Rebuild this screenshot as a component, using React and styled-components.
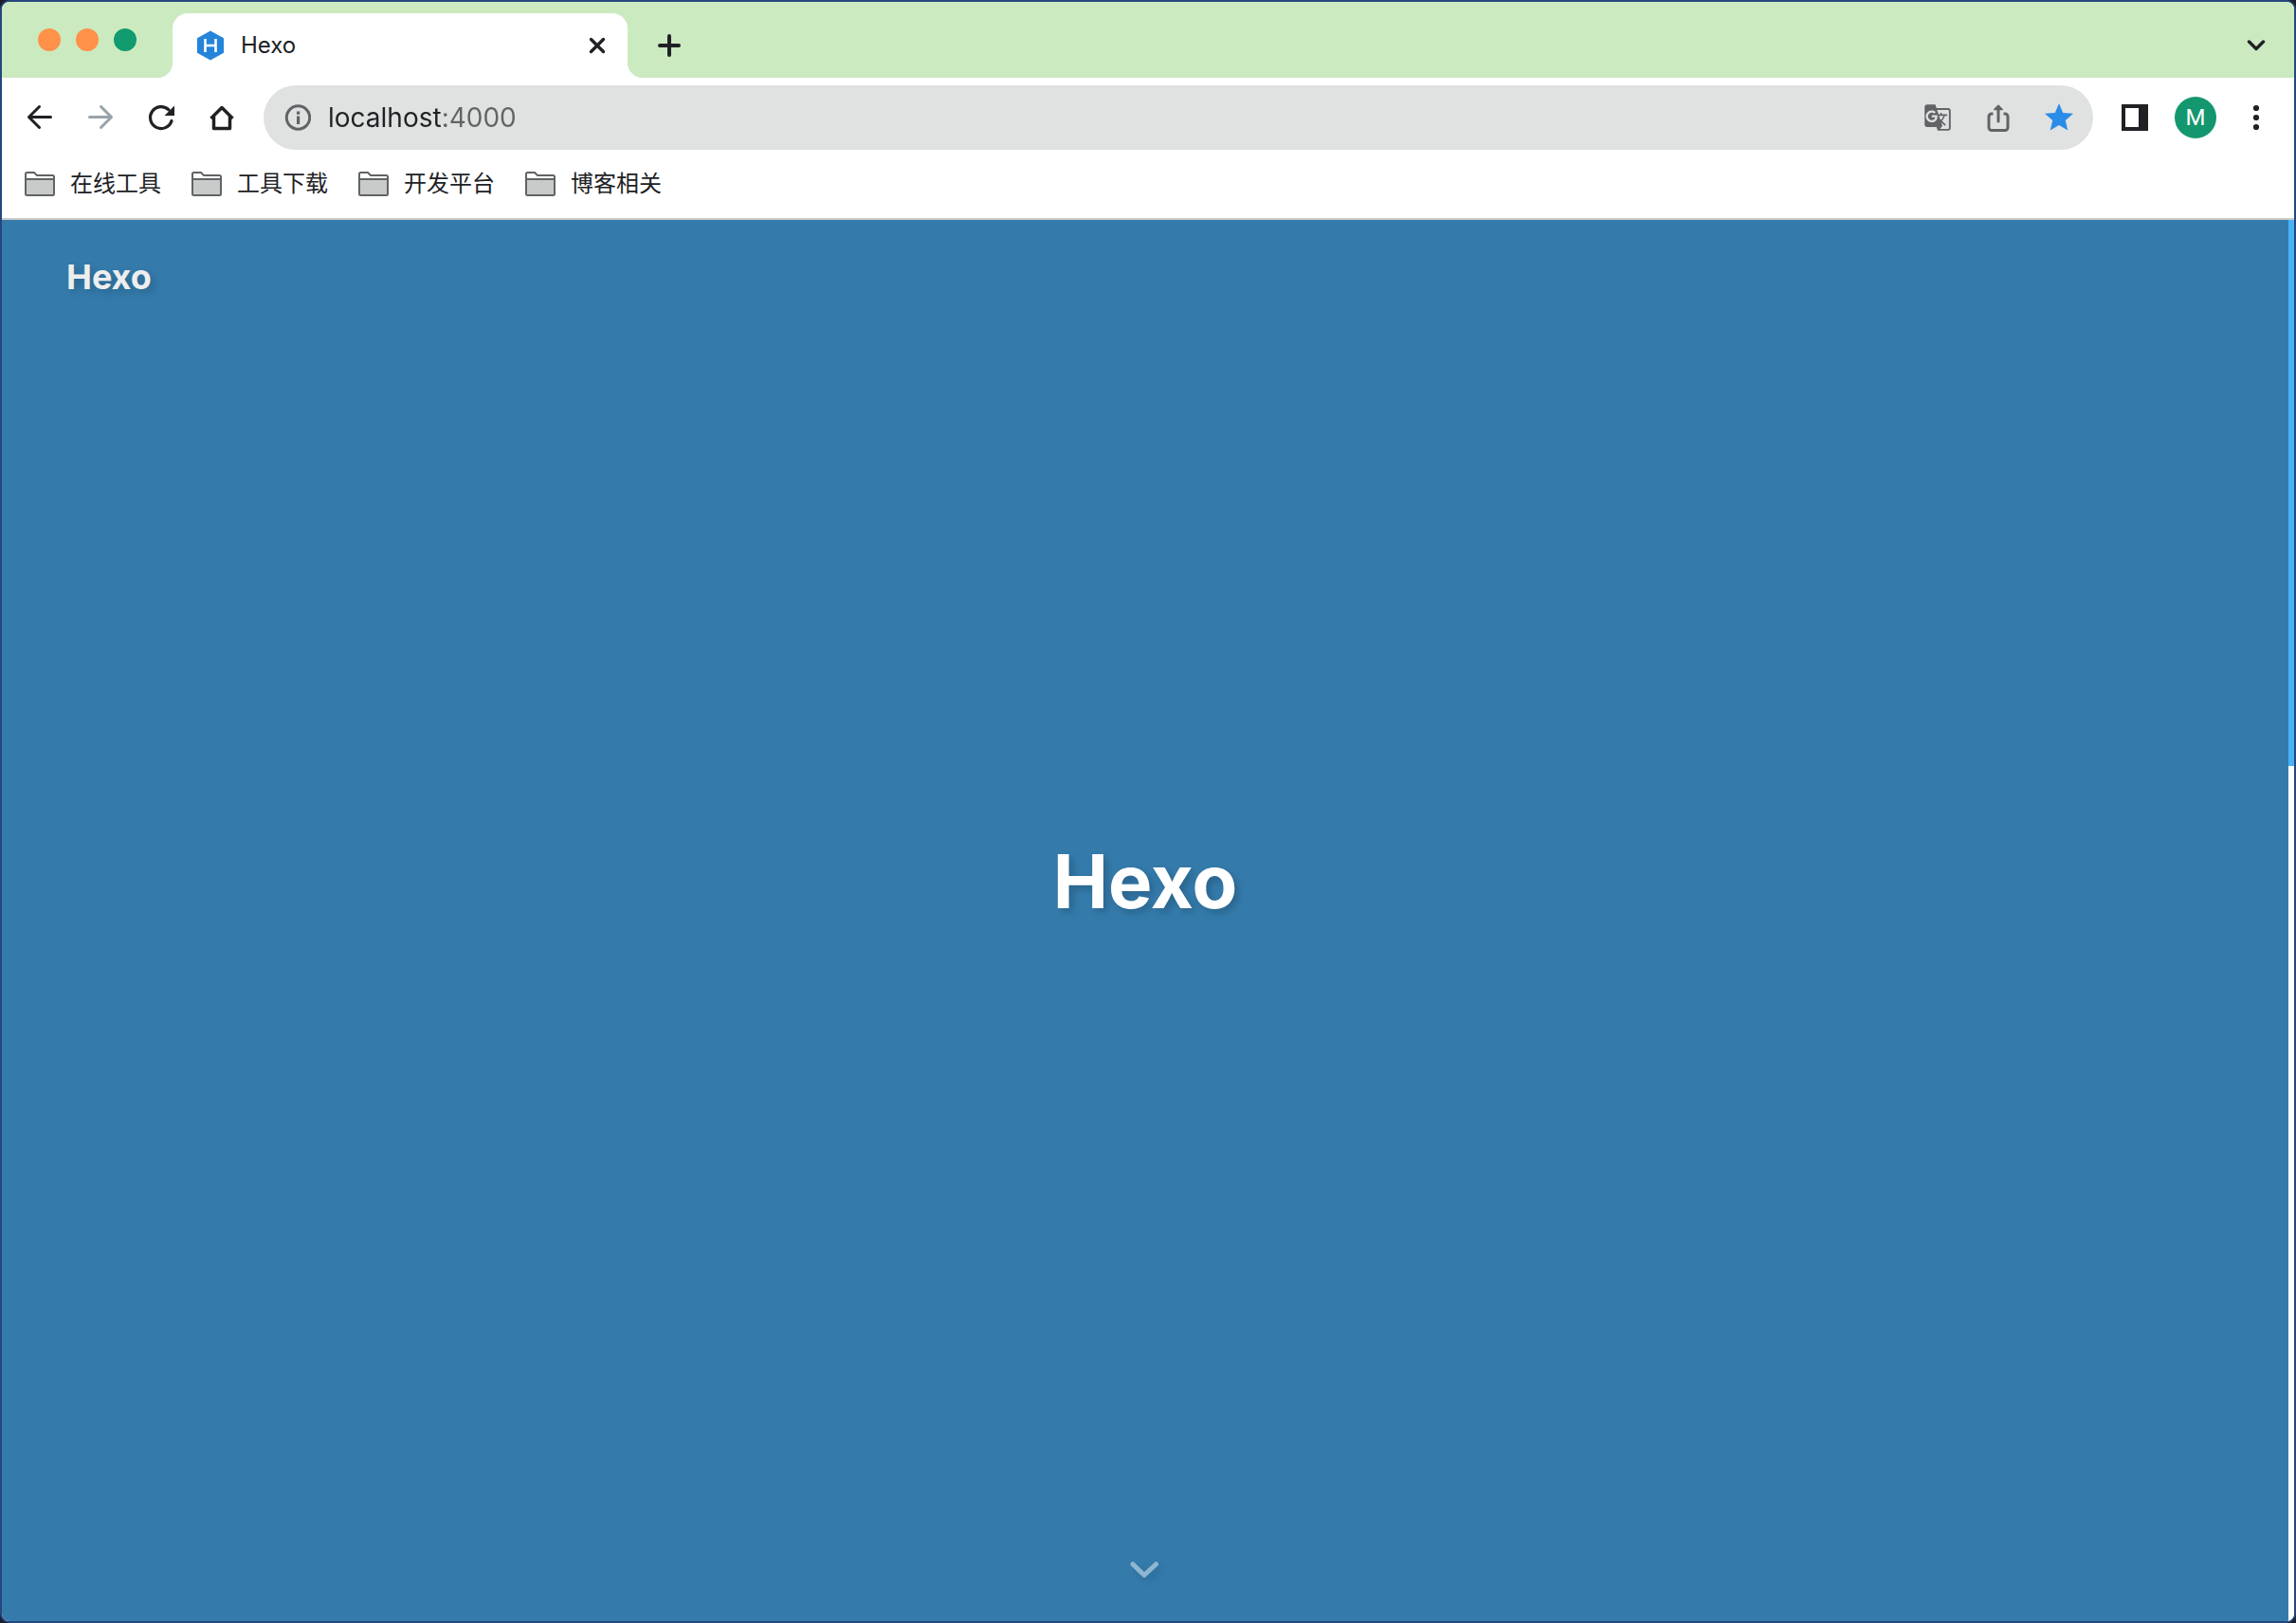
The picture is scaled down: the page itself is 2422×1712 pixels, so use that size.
import styled, { createGlobalStyle } from "styled-components";
import { MdGTranslate, MdStar } from "react-icons/md";

const GlobalStyle = createGlobalStyle`
  * {
    box-sizing: border-box;
  }
  body {
    margin: 0;
    background: #1b1f2b;
    font-family: Inter, "Noto Sans CJK SC", sans-serif;
    color: #202124;
  }
  button {
    font: inherit;
    color: inherit;
    background: none;
    border: none;
    padding: 0;
    cursor: pointer;
  }
`;

const Window = styled.div`
  display: flex;
  flex-direction: column;
  min-height: 100vh;
  border: 2px solid #26477e;
  border-radius: 10px;
  background: #fff;
  overflow: hidden;
`;

const TabStrip = styled.div`
  display: flex;
  align-items: center;
  height: 80px;
  padding: 0 20px 0 38px;
  background: #cbeac0;
`;

const Lights = styled.div`
  display: flex;
  gap: 16px;
  margin-right: 38px;
`;

const Light = styled.button`
  width: 24px;
  height: 24px;
  border-radius: 50%;
  background: ${(p) => p.$color};
`;

const Tab = styled.div`
  position: relative;
  display: flex;
  align-items: center;
  align-self: flex-end;
  gap: 18px;
  width: 480px;
  height: 68px;
  padding: 0 16px 0 26px;
  border-radius: 16px 16px 0 0;
  background: #fff;
  font-size: 24px;
  line-height: 32px;

  &::before,
  &::after {
    content: "";
    position: absolute;
    bottom: 0;
    width: 16px;
    height: 16px;
  }
  &::before {
    right: 100%;
    background: radial-gradient(circle at 0 0, transparent 16px, #fff 16px);
  }
  &::after {
    left: 100%;
    background: radial-gradient(circle at 100% 0, transparent 16px, #fff 16px);
  }
`;

const TabTitle = styled.span`
  flex: 1;
`;

const IconButton = styled.button`
  display: flex;
  align-items: center;
  justify-content: center;
  flex: none;
  width: ${(p) => (p.$small ? "32px" : "40px")};
  height: 40px;
  color: ${(p) => p.$color || "#202124"};
  svg {
    flex: none;
  }
`;

const NewTab = styled(IconButton)`
  margin: 12px auto 0 24px;
`;

const TabSearch = styled(IconButton)`
  margin-top: 12px;
`;

const Toolbar = styled.div`
  display: flex;
  align-items: center;
  gap: 24px;
  padding: 8px 20px 0;
`;

const Omnibox = styled.div`
  flex: 1;
  display: flex;
  align-items: center;
  gap: 24px;
  height: 68px;
  padding: 0 16px 0 22px;
  border-radius: 34px;
  background: #e0e2e1;
`;

const Address = styled.label`
  flex: 1;
  display: flex;
  align-items: center;
  gap: 18px;
`;

/* host is dark, the port after it is grey */
const UrlInput = styled.input`
  flex: 1;
  height: 40px;
  padding: 0;
  border: none;
  outline: none;
  font: 28px/40px Inter, sans-serif;
  color: transparent;
  background: linear-gradient(to right, #202124 120px, #606466 120px);
  background-clip: text;
  -webkit-background-clip: text;
`;

const Avatar = styled.span`
  flex: none;
  width: 44px;
  height: 44px;
  border-radius: 50%;
  background: #14976f;
  color: #fff;
  font: 24px/44px Roboto, sans-serif;
  text-align: center;
`;

const Bookmarks = styled.nav`
  display: flex;
  align-items: center;
  gap: 32px;
  height: 74px;
  padding: 0 24px;
  border-bottom: 2px solid #c9cbca;
`;

const Bookmark = styled.button`
  display: flex;
  align-items: center;
  gap: 16px;
  font-size: 24px;
  line-height: 32px;
`;

const Viewport = styled.div`
  flex: 1;
  display: flex;
`;

const Hero = styled.main`
  flex: 1;
  display: flex;
  flex-direction: column;
  background: #347bac;
  text-shadow: 4px 4px 8px rgba(0, 0, 0, 0.2);
`;

const SiteNav = styled.header`
  display: flex;
  align-items: center;
  height: 120px;
  padding: 0 68px;
`;

const SiteName = styled.a`
  color: #eee;
  font-size: 36px;
  line-height: 44px;
  font-weight: 700;
  text-decoration: none;
`;

const SiteInfo = styled.div`
  flex: 1;
  display: flex;
  align-items: center;
  justify-content: center;
`;

const SiteTitle = styled.h1`
  margin: 0;
  color: #fff;
  font-size: 78px;
  line-height: 96px;
  font-weight: 700;
`;

const ScrollDown = styled.div`
  display: flex;
  align-items: flex-end;
  justify-content: center;
  height: 202px;
  padding-bottom: 34px;
  filter: drop-shadow(4px 4px 4px rgba(0, 0, 0, 0.15));
`;

const ScrollTrack = styled.div`
  width: 6px;
  background: #fff;
`;

const ScrollThumb = styled.div`
  height: 39%;
  background: #49b1f5;
`;

const line = {
  fill: "none",
  stroke: "currentColor",
  strokeWidth: 3,
  strokeLinecap: "round",
  strokeLinejoin: "round",
};

const HexoIcon = () => (
  <svg width="28" height="32" viewBox="0 0 28 32">
    <path d="M14 0.5 28 8.3V23.7L14 31.5 0 23.7V8.3Z" fill="#2484da" />
    <path d="M8.5 9v14M19.5 9v14M8.5 16h11" fill="none" stroke="#fff" strokeWidth="2.6" />
  </svg>
);

const BackIcon = () => (
  <svg width="32" height="32" viewBox="0 0 32 32" {...line}>
    <path d="M27.5 15.5H4.5M15.5 4.5l-11 11 11 11" />
  </svg>
);

const ForwardIcon = () => (
  <svg width="32" height="32" viewBox="0 0 32 32" {...line}>
    <path d="M4.5 15.5h23M16.5 4.5l11 11-11 11" />
  </svg>
);

const ReloadIcon = () => (
  <svg width="32" height="32" viewBox="0 0 32 32">
    <path d="M27 19.5A11.5 11.5 0 1 1 24 7.8" fill="none" stroke="currentColor" strokeWidth="3.2" strokeLinecap="round" />
    <path d="M30 3.5V14H19.5Z" fill="currentColor" />
  </svg>
);

const HomeIcon = () => (
  <svg width="32" height="32" viewBox="0 0 32 32">
    <path d="M7.5 15V27.5h17V15M4.5 17 16 5.5 27.5 17" fill="none" stroke="currentColor" strokeWidth="3.5" strokeLinejoin="round" />
  </svg>
);

const InfoIcon = () => (
  <svg width="28" height="28" viewBox="0 0 28 28">
    <circle cx="14.5" cy="14" r="12.2" fill="none" stroke="#606466" strokeWidth="3" />
    <path d="M13 7.500h3.200v3.200h-3.200zM13 12.500h3.200v8.500h-3.200z" fill="#606466" />
  </svg>
);

const ShareIcon = () => (
  <svg width="32" height="32" viewBox="0 0 32 32" {...line}>
    <path d="M10.500 12H9a3 3 0 0 0-3 3v11.500a3 3 0 0 0 3 3h14a3 3 0 0 0 3-3V15a3 3 0 0 0-3-3h-1.500" strokeLinecap="butt" />
    <path d="M16 20V4.500" />
    <path d="M11.800 7.500 16 3.300 20.200 7.500Z" fill="currentColor" strokeWidth="1.500" />
  </svg>
);

const PanelIcon = () => (
  <svg width="28" height="28" viewBox="0 0 28 28">
    <path d="M0 0h28v28H0zM4 4v20h14V4z" fill="currentColor" fillRule="evenodd" />
  </svg>
);

const DotsIcon = () => (
  <svg width="8" height="28" viewBox="0 0 8 28" fill="currentColor">
    <circle cx="4" cy="4" r="3.1" />
    <circle cx="4" cy="14" r="3.1" />
    <circle cx="4" cy="24" r="3.1" />
  </svg>
);

const FolderIcon = () => (
  <svg width="32" height="26" viewBox="0 0 32 26">
    <path d="M1 9h30v15H1z" fill="#c9cbca" />
    <path d="M1 8V2.5Q1 1 2.5 1H10l3 3h16.5Q31 4 31 5.5v18Q31 25 29.5 25h-27Q1 25 1 23.5V8h30" fill="none" stroke="#606466" strokeWidth="2" />
  </svg>
);

const bookmarks = ["在线工具", "工具下载", "开发平台", "博客相关"];

export default function App() {
  return (
    <Window>
      <GlobalStyle />
      <TabStrip>
        <Lights>
          <Light $color="#ff9148" aria-label="Close window" />
          <Light $color="#ff9148" aria-label="Minimize" />
          <Light $color="#119b6e" aria-label="Zoom" />
        </Lights>
        <Tab>
          <HexoIcon />
          <TabTitle>Hexo</TabTitle>
          <IconButton $small aria-label="Close tab">
            <svg width="20" height="20" viewBox="0 0 20 20" {...line} strokeWidth="3.4">
              <path d="M3.5 3.5l13 13M16.5 3.5l-13 13" />
            </svg>
          </IconButton>
        </Tab>
        <NewTab aria-label="New tab">
          <svg width="24" height="24" viewBox="0 0 24 24" {...line} strokeWidth="4">
            <path d="M12 2v20M2 12h20" />
          </svg>
        </NewTab>
        <TabSearch aria-label="Search tabs">
          <svg width="20" height="12" viewBox="0 0 20 12" {...line} strokeWidth="3.4">
            <path d="M2.5 2l7.5 7.5L17.5 2" />
          </svg>
        </TabSearch>
      </TabStrip>

      <Toolbar>
        <IconButton aria-label="Back"><BackIcon /></IconButton>
        <IconButton aria-label="Forward" $color="#98a3a9"><ForwardIcon /></IconButton>
        <IconButton aria-label="Reload"><ReloadIcon /></IconButton>
        <IconButton aria-label="Home"><HomeIcon /></IconButton>
        <Omnibox>
          <Address>
            <InfoIcon />
            <UrlInput aria-label="Address" type="text" defaultValue="localhost:4000" spellCheck={false} />
          </Address>
          <IconButton aria-label="Translate" $color="#606466"><MdGTranslate size={30} /></IconButton>
          <IconButton aria-label="Share" $color="#606466"><ShareIcon /></IconButton>
          <IconButton aria-label="Edit bookmark" $color="#2a8ce8"><MdStar size={36} /></IconButton>
        </Omnibox>
        <IconButton aria-label="Side panel"><PanelIcon /></IconButton>
        <IconButton aria-label="Profile"><Avatar>M</Avatar></IconButton>
        <IconButton aria-label="Menu"><DotsIcon /></IconButton>
      </Toolbar>

      <Bookmarks>
        {bookmarks.map((name) => (
          <Bookmark key={name}>
            <FolderIcon />
            {name}
          </Bookmark>
        ))}
      </Bookmarks>

      <Viewport>
        <Hero>
          <SiteNav>
            <SiteName href="#">Hexo</SiteName>
          </SiteNav>
          <SiteInfo>
            <SiteTitle>Hexo</SiteTitle>
          </SiteInfo>
          <ScrollDown>
            <IconButton aria-label="Scroll down" $color="#8fb6d0">
              <svg width="32" height="20" viewBox="0 0 32 20" {...line} strokeWidth="5">
                <path d="M3 4L15 15.5 27.500 4" />
              </svg>
            </IconButton>
          </ScrollDown>
        </Hero>
        <ScrollTrack>
          <ScrollThumb />
        </ScrollTrack>
      </Viewport>
    </Window>
  );
}
